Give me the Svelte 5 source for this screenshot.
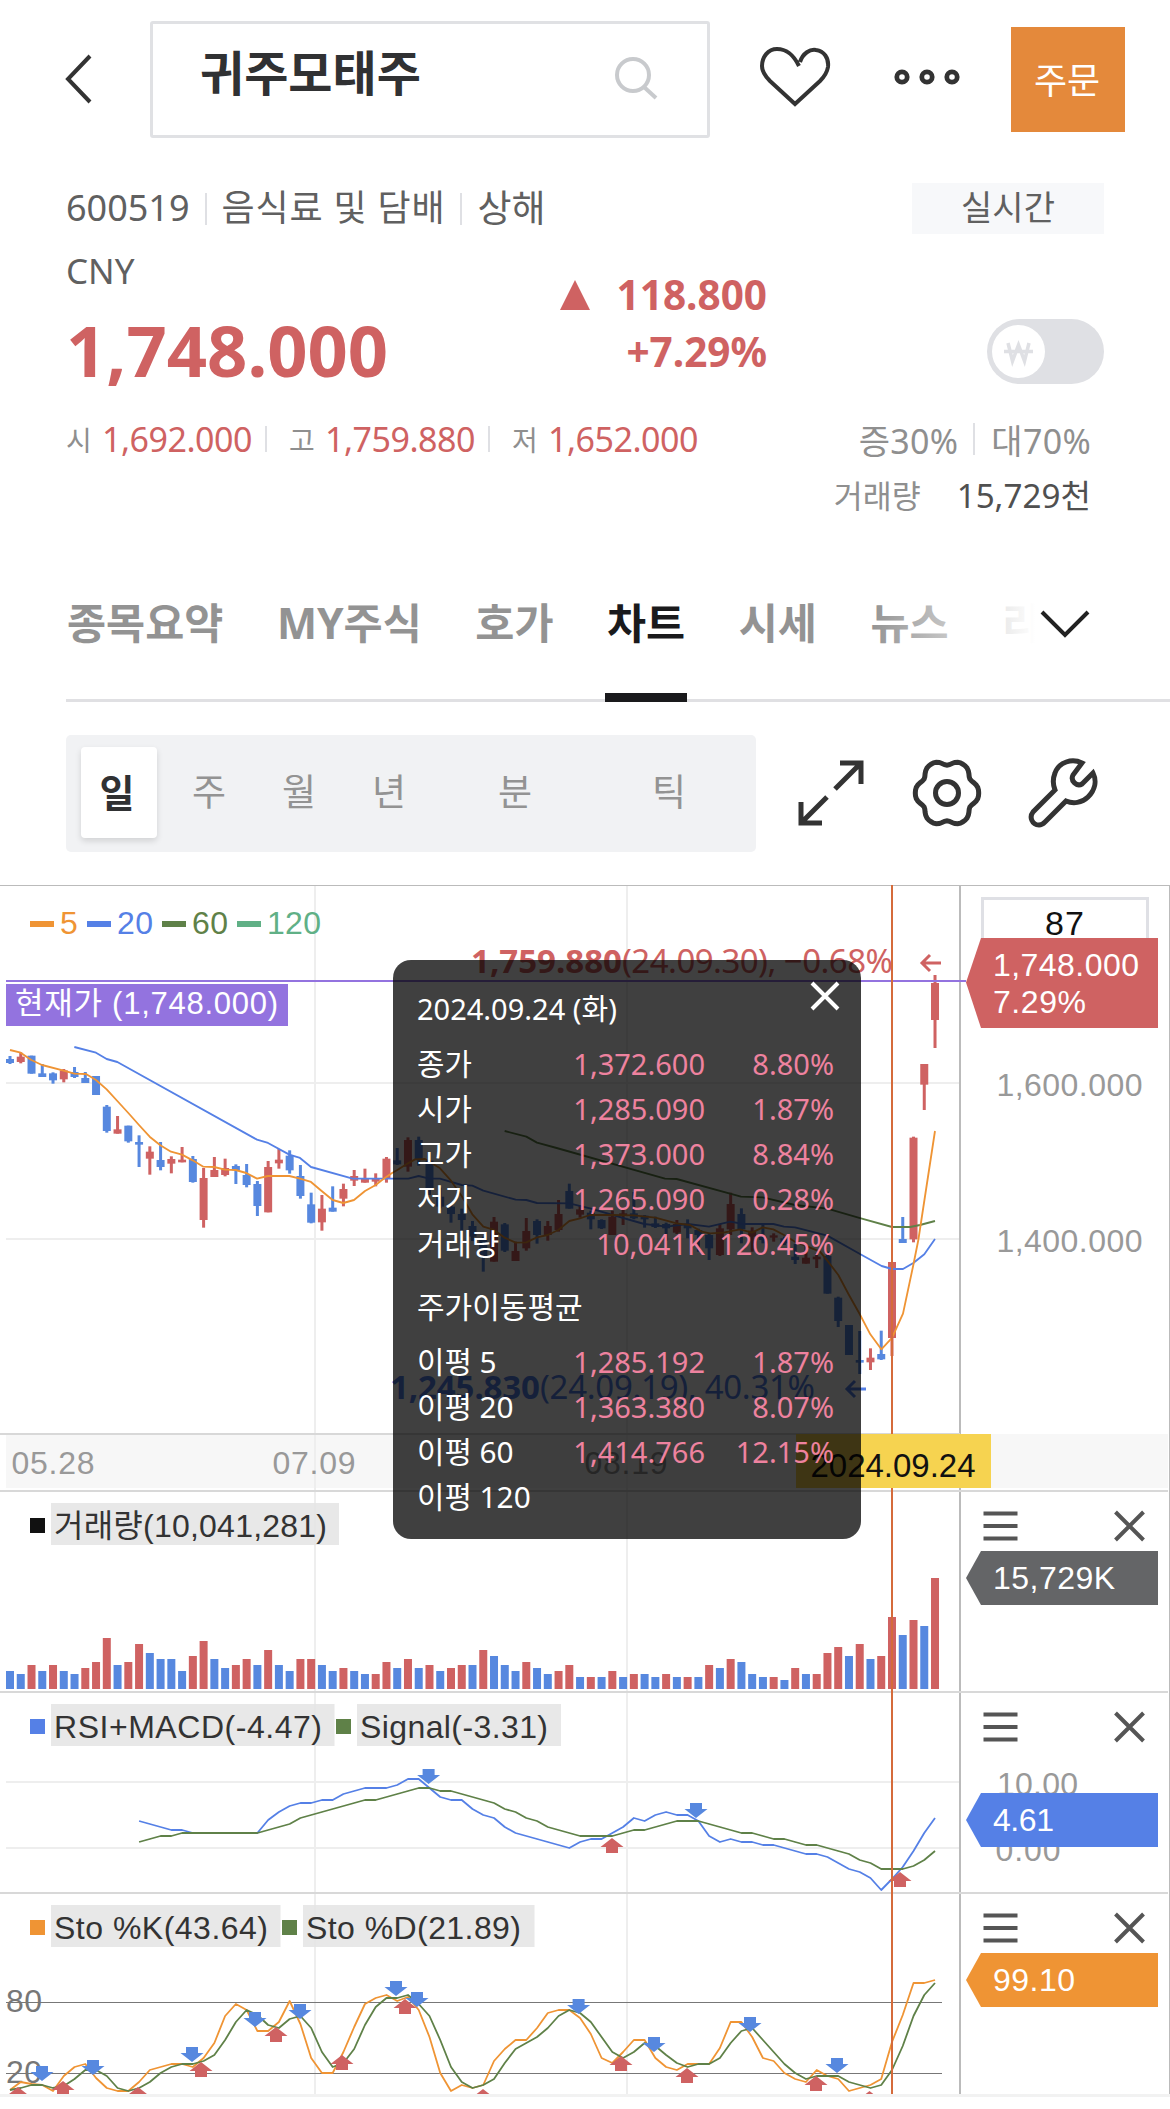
<!--
  STOCK DETAIL PAGE

  Quote header, section tabs and the daily chart with its volume, RSI+MACD and
  stochastic panels. The chart is one SVG in page pixels.
-->

<script>
  const tabs = ['종목요약', 'MY주식', '호가', '차트', '시세', '뉴스', '리'];
  const activeTab = '차트';

  const periods = [
    { text: '일', width: 76, active: true },
    { text: '주', width: 90 },
    { text: '월', width: 90 },
    { text: '년', width: 90 },
    { text: '분', width: 162 },
    { text: '틱', width: 146 },
  ];

  const priceRows = [
    ['종가', '1,372.600', '8.80%'],
    ['시가', '1,285.090', '1.87%'],
    ['고가', '1,373.000', '8.84%'],
    ['저가', '1,265.090', '0.28%'],
    ['거래량', '10,041K', '120.45%'],
  ];
  const averageRows = [
    ['이평 5', '1,285.192', '1.87%'],
    ['이평 20', '1,363.380', '8.07%'],
    ['이평 60', '1,414.766', '12.15%'],
    ['이평 120', '', ''],
  ];

  const RED = '#cf6262';
  const BLUE = '#5788df';
  const LINE_BLUE = '#5580e6';
  const ORANGE = '#ef9434';
  const GREEN = '#5f8148';

  /** Horizontal center of the bar at an index. */
  const barX = (index) => 10 + index * 10.756;

  // up/down flag, high, body top, body bottom, low (thirds of a pixel)
  const candles = [
    'b 528 537 549 552', 'r 517 530 546 550', 'b 527 527 581 581', 'b 552 580 591 591',
    'b 577 580 601 611', 'r 567 571 598 607', 'b 561 576 591 594', 'b 576 594 609 609',
    'b 588 588 645 645', 'b 675 680 753 758', 'r 708 748 761 761', 'b 737 737 784 788',
    'b 766 786 794 861', 'r 799 815 836 884', 'b 786 840 861 871', 'r 829 837 851 880',
    'r 801 839 847 847', 'b 828 837 906 908', 'r 864 894 1020 1043', 'r 831 870 891 891',
    'r 836 864 885 889', 'b 853 858 871 912', 'b 852 885 915 922', 'b 903 912 978 1008',
    'r 843 861 997 997', 'r 807 839 850 866', 'b 811 827 871 881', 'b 855 888 948 956',
    'b 938 973 1028 1030', 'r 945 986 1027 1052', 'b 919 983 995 995', 'r 911 927 956 979',
    'r 870 888 902 918', 'r 866 897 908 908', 'r 880 894 905 919', 'r 831 836 897 908',
    'b 804 841 853 855', 'r 772 780 860 875', 'b 770 780 840 857', 'b 840 842 925 945',
    'b 923 950 980 985', 'b 970 980 1002 1028', 'b 986 1002 1020 1052', 'b 1023 1038 1070 1083',
    'b 1070 1080 1130 1175', 'r 1011 1025 1145 1145', 'b 1029 1033 1112 1116', 'r 1085 1113 1143 1143',
    'r 1014 1053 1105 1112', 'b 1018 1023 1065 1091', 'r 1023 1038 1065 1082', 'r 960 1002 1050 1055',
    'b 911 933 986 986', 'r 975 988 1004 1013', 'b 992 998 1018 1048', 'b 1018 1020 1045 1047',
    'r 992 1010 1065 1065', 'r 985 1000 1008 1035', 'b 936 1000 1015 1018', 'b 1005 1007 1018 1043',
    'b 1010 1030 1041 1044', 'b 1028 1032 1045 1082', 'r 1020 1032 1058 1062', 'b 1018 1032 1045 1075',
    'b 1046 1050 1065 1115', 'b 1060 1065 1105 1140', 'r 1032 1045 1125 1128', 'r 938 972 1048 1065',
    'b 985 1002 1048 1090', 'r 1042 1052 1070 1115', 'b 1033 1070 1080 1090', 'r 1060 1066 1073 1085',
    'b 1070 1075 1090 1095', 'b 1092 1130 1140 1152', 'r 1095 1133 1151 1151', 'r 1120 1130 1138 1164',
    'b 1115 1128 1241 1241', 'b 1250 1253 1323 1341', 'b 1335 1335 1425 1425', 'b 1353 1440 1448 1482',
    'r 1405 1433 1447 1470', 'b 1352 1422 1438 1440', 'r 1146 1146 1374 1428', 'b 1011 1077 1089 1089',
    'r 770 773 1078 1087', 'r 552 552 614 690', 'r 285 309 420 504',
  ].map((row, index) => {
    const [flag, ...values] = row.split(' ');
    const [high, top, bottom, low] = values.map((v) => 880 + v / 3);
    return { x: barX(index), color: flag === 'r' ? RED : BLUE, high, top, bottom, low };
  });

  const ma5 = '30,510 62,518 94,540 126,555 191,572 223,581 258,582 288,600 320,628 352,663 385,699 417,735 449,770 481,796 513,815 546,824 578,841 610,860 642,861 675,869 707,870 739,879 771,896 804,888 868,888 900,896 933,906 965,933 998,960 1030,969 1062,960 1095,933 1127,915 1150,897 1175,880 1192,870 1224,850 1245,838 1275,837 1320,865 1353,902 1385,948 1417,1003 1450,1040 1482,1050 1514,1073 1547,1088 1579,1087 1611,1072 1643,1065 1675,1050 1708,1023 1740,1015 1770,1005 1837,1005 1901,1006 1966,1013 2030,1030 2070,1035 2105,1055 2130,1060 2170,1058 2220,1048 2256,1058 2288,1042 2320,1048 2352,1065 2385,1085 2460,1115 2482,1142 2515,1185 2547,1245 2579,1302 2611,1363 2644,1408 2676,1374 2709,1301 2740,1155 2755,1080 2805,753';
  const ma20 = '223,501 288,518 320,537 352,546 771,779 804,789 868,824 900,834 933,861 1058,896 1225,896 1256,888 1288,896 1320,896 1385,915 1417,917 1450,932 1547,959 1579,960 1611,969 1708,970 1770,985 1901,1023 1933,1032 2000,1040 2063,1032 2127,1040 2191,1025 2230,1032 2320,1032 2352,1040 2385,1042 2482,1067 2580,1122 2645,1158 2676,1167 2709,1167 2740,1149 2773,1123 2805,1077';
  const ma60 = '1514,753 1579,770 1611,788 1670,804 1995,896 2030,897 2223,950 2288,952 2385,975 2482,986 2583,1015 2676,1041 2730,1041 2760,1035 2805,1023';

  const volumes = 'b18 b15 r24 b18 r24 b18 b15 r21 r27 r51 b24 r27 r45 b36 b30 b30 b18 r33 r48 b30 b21 r24 r30 b24 r39 b24 b18 r30 r30 b24 b18 r21 b18 b15 r15 r27 b21 r30 b21 r24 b18 r21 r24 b24 r39 b33 b24 b18 r27 b21 b15 r18 r24 b12 r12 b12 r18 b12 r15 b15 b12 r15 b12 r12 b12 r24 b21 r30 b27 b15 b12 r12 b9 r21 b15 r15 r36 r42 b33 r45 b30 r33 r72 b54 r69 b63 r111'
    .split(' ')
    .map((v) => ({ color: v[0] === 'r' ? RED : BLUE, height: Number(v.slice(1)) }));

  // Oscillator values, pixels below the top of the RSI panel
  const rsi = [131, 134, 137, 140, 140, 143, 143, 143, 143, 143, 143, 143, 130, 122, 116, 113, 113, 110, 110, 104, 101, 98, 98, 98, 95, 89, 89, 98, 107, 110, 110, 119, 125, 128, 137, 143, 146, 149, 152, 155, 158, 152, 149, 149, 143, 137, 128, 131, 125, 122, 125, 125, 131, 146, 152, 149, 152, 152, 155, 155, 158, 161, 164, 164, 167, 173, 179, 182, 188, 200, 189, 177, 161, 143, 128];
  const signal = [152, 149, 146, 146, 143, 143, 143, 143, 143, 143, 143, 143, 140, 137, 134, 128, 125, 122, 119, 116, 113, 110, 110, 107, 104, 101, 98, 98, 101, 101, 104, 107, 110, 113, 119, 122, 128, 131, 137, 140, 143, 146, 146, 146, 146, 143, 140, 140, 137, 134, 131, 131, 131, 134, 137, 140, 143, 143, 146, 149, 149, 152, 155, 155, 158, 161, 164, 170, 173, 179, 179, 179, 176, 170, 161];
  const stoK = [400, 392, 394, 395, 401, 386, 377, 374, 388, 398, 401, 401, 392, 380, 377, 374, 374, 377, 368, 353, 326, 314, 320, 341, 341, 332, 311, 334, 368, 383, 383, 362, 337, 314, 308, 305, 311, 307, 320, 347, 383, 401, 395, 398, 395, 371, 359, 350, 350, 338, 323, 320, 320, 328, 344, 368, 373, 362, 350, 350, 368, 377, 380, 374, 374, 374, 358, 332, 332, 347, 368, 371, 383, 389, 392, 380, 386, 389, 401, 398, 395, 389, 352, 325, 293, 293, 290];
  const stoD = [400, 398, 395, 395, 398, 396, 389, 380, 380, 386, 398, 401, 398, 392, 383, 377, 374, 374, 371, 365, 350, 332, 320, 325, 335, 338, 329, 326, 338, 362, 377, 373, 359, 335, 317, 308, 308, 305, 314, 326, 350, 377, 392, 398, 395, 389, 373, 359, 353, 347, 338, 326, 320, 323, 332, 347, 362, 368, 362, 353, 356, 365, 373, 377, 374, 374, 368, 353, 341, 338, 350, 362, 374, 383, 389, 386, 386, 386, 392, 395, 398, 395, 380, 356, 326, 305, 293];

  function points(values, start = 0) {
    return values.map((v, index) => `${barX(index + start)},${1690 + v}`).join(' ');
  }

  // Tips of the buy (up) and sell (down) markers
  const sells = [
    [428.6, 1784], [696, 1818], [42, 2081], [93, 2075], [192, 2062], [255, 2027],
    [300, 2019], [396, 1996], [417, 2007], [578.6, 2014], [654, 2052], [750, 2032], [837, 2073],
  ];
  const buys = [
    [612, 1838], [900, 1872], [18, 2087], [63, 2081], [138, 2087], [201, 2062], [276, 2027],
    [342, 2055], [405, 1999], [483, 2089], [621, 2056], [687, 2068], [816, 2076], [869.5, 2091],
  ];

  const averages = [
    { text: '5', x: 30, width: 17, color: ORANGE },
    { text: '20', x: 87, width: 36, color: LINE_BLUE },
    { text: '60', x: 162, width: 36, color: GREEN },
    { text: '120', x: 237, width: 54, color: '#60b086' },
  ];

  const legends = [
    { x: 30, y: 1503, width: 288, length: 273, color: '#111', text: '거래량(10,041,281)' },
    { x: 30, y: 1704, width: 283.5, length: 268, color: LINE_BLUE, text: 'RSI+MACD(-4.47)' },
    { x: 336, y: 1704, width: 204, length: 188, color: GREEN, text: 'Signal(-3.31)' },
    { x: 30, y: 1905, width: 229.5, length: 214, color: ORANGE, text: 'Sto %K(43.64)' },
    { x: 282, y: 1905, width: 231.5, length: 215, color: GREEN, text: 'Sto %D(21.89)' },
  ];

  const tags = [
    { y: 1551, color: '#646567', text: '15,729K', length: 122 },
    { y: 1793, color: LINE_BLUE, text: '4.61', length: 61 },
    { y: 1953, color: ORANGE, text: '99.10', length: 82 },
  ];

  // Six-lobed outline of the settings icon
  const gear = Array.from({ length: 72 }, (_, i) => {
    const angle = (i * Math.PI) / 36;
    const r = 29.6 + 2.6 * Math.cos(6 * angle) - 0.5 * Math.cos(12 * angle);
    return `${(35 + r * Math.cos(angle)).toFixed(1)},${(35 + 1.05 * r * Math.sin(angle)).toFixed(1)}`;
  }).join(' ');
</script>

<div class="page">
  <header>
    <svg class="back" width="30" height="52" viewBox="0 0 30 52">
      <path d="M27 3 L5 26 L27 49" />
    </svg>
    <div class="search">
      <span>귀주모태주</span>
      <svg width="46" height="46" viewBox="0 0 46 46">
        <circle cx="20" cy="20" r="16" />
        <path d="M31 32 L43 43" />
      </svg>
    </div>
    <svg class="heart" width="74" height="64" viewBox="0 0 74 64">
      <path d="M42 17 C45 8 52 4 58 5 C66 6 71 13 70 22 C69 28 66 32 62 36 L37 59 L12 36 C7 31 4 27 4 21 C4 12 10 4 19 4 C30 4 36 11 41 21" />
    </svg>
    <svg class="more" width="68" height="18" viewBox="0 0 68 18">
      <circle cx="9" cy="9" r="5.2" />
      <circle cx="34" cy="9" r="5.2" />
      <circle cx="59" cy="9" r="5.2" />
    </svg>
    <button class="order">주문</button>
  </header>

  <section class="quote">
    <div class="info">
      <span>600519</span><i></i><span class="sector">음식료 및 담배</span><i></i><span class="market">상해</span>
      <b class="live">실시간</b>
    </div>
    <div class="currency">CNY</div>
    <div class="price">
      <strong>1,748.000</strong>
      <div class="change">
        <div><em></em>118.800</div>
        <div>+7.29%</div>
      </div>
      <div class="toggle">
        <svg width="53" height="53" viewBox="0 0 53 53">
          <circle cx="26.5" cy="26.5" r="26.5" fill="#fff" />
          <path d="M16 18 L20.500 36 L26.500 20 L32.500 36 L37 18 M12 26.500 H41" />
        </svg>
      </div>
    </div>
    <div class="range">
      <small>시</small><span>1,692.000</span><i></i>
      <small>고</small><span>1,759.880</span><i></i>
      <small>저</small><span>1,652.000</span>
      <div class="margin"><span>증30%</span><i></i><span>대70%</span></div>
    </div>
    <div class="volume"><span>거래량</span><b>15,729천</b></div>
  </section>

  <nav>
    {#each tabs as tab}
      <span class:active={tab === activeTab}>{tab}</span>
    {/each}
    <div class="fade">
      <svg width="56" height="34" viewBox="0 0 56 34"><path d="M5 4 L28 27 L51 4" /></svg>
    </div>
  </nav>

  <div class="toolbar">
    <div class="periods">
      {#each periods as period}
        <span class:active={period.active} style="width: {period.width}px">{period.text}</span>
      {/each}
    </div>
    <svg width="70" height="70" viewBox="0 0 70 70">
      <path d="M44 5 H65 V26 M64 6 L39 31 M31 39 L6 64 M5 44 V65 H26" />
    </svg>
    <svg width="70" height="70" viewBox="0 0 70 70">
      <polygon points={gear} />
      <circle cx="35" cy="35" r="11.500" />
    </svg>
    <svg width="70" height="70" viewBox="0 0 70 70">
      <path d="M54 5 C44 0 31 4 27 15 C25 20 25 27 27 32 L5 54 C1 59 4 67 11 67 C14 67 15 66 17 64 L38 43 C45 46 54 45 60 39 C67 32 69 23 65 15 L54 26 C49 29 42 23 45 17 Z" />
    </svg>
  </div>

  <div class="chart">
    <svg width="1170" height="1224" viewBox="0 885 1170 1224">
      <defs>
        <clipPath id="plot"><rect x="0" y="885" width="1170" height="1209" /></clipPath>
      </defs>

      <!-- Panels and grid -->
      <rect x="6" y="1434" width="1162" height="54" fill="#f7f7f7" />
      <g stroke="#eee" stroke-width="2">
        <path d="M315 886 V2094 M627 886 V2094" />
        <path d="M6 1083 H960 M6 1239 H960 M6 1782 H960 M6 1848 H960" />
      </g>
      <path d="M0 885.500 H1170 M1169.500 885 V2094" stroke="#bbb" />
      <path d="M960 886 V2094" stroke="#bbb" stroke-width="2" />
      <path d="M0 1434 H960 M0 1491 H1168 M0 1692 H1168 M0 1893 H1168" stroke="#d8d8d8" stroke-width="2" />
      <rect x="0" y="2094" width="1170" height="3" fill="#f2f2f2" />

      <!-- Price panel -->
      {#each averages as item}
        <rect x={item.x} y="921" width="24" height="6" fill={item.color} />
        <text x={item.x + 30} y="934" fill={item.color} textLength={item.width}>{item.text}</text>
      {/each}

      {#each candles as c}
        <rect x={c.x - 1.5} y={c.high} width="3" height={c.low - c.high} fill={c.color} />
        <rect x={c.x - 4} y={c.top} width="8" height={c.bottom - c.top} fill={c.color} />
      {/each}
      <g class="line" transform="translate(0 880) scale(0.33333)" stroke-width="5.500">
        <polyline points={ma60} stroke={GREEN} />
        <polyline points={ma20} stroke={LINE_BLUE} />
        <polyline points={ma5} stroke={ORANGE} />
      </g>

      <path d="M6 981 H966" stroke="#9373df" stroke-width="2" />
      <rect x="6" y="984" width="282" height="42" fill="#9373df" />
      <text x="15" y="1014" fill="#fff" font-size="31" textLength="263">현재가 (1,748.000)</text>

      <g class="noto" fill={RED}>
        <text x="471" y="973" font-weight="700" textLength="151">1,759.880</text>
        <text x="622" y="973" textLength="271">(24.09.30), −0.68%</text>
        <path d="M941 963 H922 M930 955 L922 963 L930 971" stroke={RED} />
      </g>
      <g class="noto" fill={LINE_BLUE}>
        <text x="390" y="1398.500" font-weight="700" textLength="150">1,245.830</text>
        <text x="540" y="1398.500" textLength="275">(24.09.19), 40.31%</text>
        <path d="M866 1389 H847 M855 1381 L847 1389 L855 1397" stroke={LINE_BLUE} />
      </g>

      <g fill="#999">
        <text x="11.500" y="1474" textLength="83">05.28</text>
        <text x="272.500" y="1474" textLength="83">07.09</text>
        <text x="584.500" y="1474" textLength="83">08.19</text>
        <text x="996.500" y="1096" textLength="146">1,600.000</text>
        <text x="996.500" y="1252" textLength="146">1,400.000</text>
        <text x="997" y="1795" textLength="81">10.00</text>
        <text x="995.500" y="1861" textLength="65">0.00</text>
      </g>

      <!-- Volume -->
      {#each volumes as volume, index}
        <rect x={barX(index) - 4} y={1689 - volume.height} width="8" height={volume.height} fill={volume.color} />
      {/each}

      <!-- Oscillators -->
      <path d="M6 2002.500 H942 M6 2073.500 H942" stroke="#777" />
      <g fill="#777">
        <text x="6" y="2012" textLength="36">80</text>
        <text x="6" y="2083" textLength="36">20</text>
      </g>
      <g class="line" stroke-width="1.800">
        <polyline points={points(rsi, 12)} stroke={LINE_BLUE} />
        <polyline points={points(signal, 12)} stroke={GREEN} />
        <polyline points={points(stoK)} stroke={ORANGE} />
        <polyline points={points(stoD)} stroke={GREEN} />
      </g>
      <g clip-path="url(#plot)">
        {#each sells as [x, y]}
          <path transform="translate({x} {y})" d="M0 0 L-11.500 -9 H-6 V-15 H6 V-9 H11.500 Z" fill={BLUE} />
        {/each}
        {#each buys as [x, y]}
          <path transform="translate({x} {y})" d="M0 0 L11.500 9 H6 V15 H-6 V9 H-11.500 Z" fill={RED} />
        {/each}
      </g>

      {#each legends as legend}
        <rect x={legend.x} y={legend.y + 15} width="15" height="15" fill={legend.color} />
        <rect x={legend.x + 21} y={legend.y} width={legend.width} height="42" fill="#e4e4e4" fill-opacity="0.850" />
        <text x={legend.x + 24} y={legend.y + 33.5} fill="#333" textLength={legend.length}>{legend.text}</text>
      {/each}

      <!-- Crosshair -->
      <path d="M892 885 V2094" stroke="#d56b3b" stroke-width="2" />
      <rect x="796" y="1434" width="195" height="54" fill="#f6d350" />
      <text x="810.500" y="1477" fill="#111" font-size="33" textLength="165">2024.09.24</text>

      <!-- Axis tags -->
      <path d="M982.500 940 V898.500 H1147.500 V940" fill="#fff" stroke="#dfe0e5" stroke-width="3" />
      <text x="1045" y="935" fill="#111" font-size="34" textLength="39">87</text>
      <path d="M966 982.500 L981 938 H1158 V1028 H981 Z" fill={RED} />
      <g fill="#fff">
        <text x="993" y="976" textLength="146">1,748.000</text>
        <text x="993" y="1013" textLength="93">7.29%</text>
      </g>
      {#each tags as tag}
        <path d="M966 {tag.y + 27} L981 {tag.y} H1158 V{tag.y + 54} H981 Z" fill={tag.color} />
        <text x="993" y={tag.y + 37.5} fill="#fff" textLength={tag.length}>{tag.text}</text>
      {/each}
      {#each [1511, 1712, 1913] as y}
        <path
          d="M983.500 {y + 2.5} h34 m-34 12.500 h34 m-34 12.500 h34 M1115.500 {y + 1} l28 28 m0 -28 l-28 28"
          stroke="#555"
          stroke-width="4"
        />
      {/each}
    </svg>

    <div class="tooltip">
      <svg width="32" height="32" viewBox="0 0 32 32"><path d="M3 3 L29 29 M29 3 L3 29" /></svg>
      <h4>2024.09.24 (화)</h4>
      {#each priceRows as [label, value, rate]}
        <div class="row"><span>{label}</span><b>{value}</b><b>{rate}</b></div>
      {/each}
      <h5>주가이동평균</h5>
      {#each averageRows as [label, value, rate]}
        <div class="row"><span>{label}</span><b>{value}</b><b>{rate}</b></div>
      {/each}
    </div>
  </div>
</div>

<style>
  :global(body) {
    margin: 0;
    background: #fff;
  }

  .page {
    width: 1170px;
    height: 2109px;
    overflow: hidden;
    color: #606060;
    font-family: 'Noto Sans', 'Noto Sans CJK KR', sans-serif;
  }

  .page svg {
    display: block;
    flex: none;
  }

  i {
    width: 2px;
    height: 32px;
    background: #dfe0e4;
  }

  b {
    font-weight: 400;
  }

  header {
    display: flex;
    align-items: center;
    height: 158px;
    padding-left: 63px;
    box-sizing: border-box;
  }

  header svg {
    fill: none;
    stroke: #333;
    stroke-width: 4;
  }

  .search {
    display: flex;
    justify-content: space-between;
    box-sizing: border-box;
    width: 560px;
    height: 117px;
    margin-left: 57px;
    padding: 31px 48px 0 47px;
    border: 3px solid #e0e1e4;
    border-radius: 3px;
    color: #303133;
    font-weight: 700;
    font-size: 48px;
    line-height: 36px;
  }

  .search svg {
    stroke: #c8cacd;
  }

  .heart {
    margin: -4px 0 0 48px;
  }

  .more {
    margin: -4px 0 0 61px;
    stroke-width: 4.8;
  }

  .order {
    width: 114px;
    height: 105px;
    margin-left: 50px;
    padding: 0 2px 3px 0;
    border: 0;
    background: #e4893b;
    color: #fff;
    font: 36px/102px 'Noto Sans CJK KR', sans-serif;
  }

  .quote {
    box-sizing: border-box;
    height: 422px;
    padding: 25px 66px 0;
  }

  .info {
    display: flex;
    align-items: center;
    height: 51px;
    font-size: 36px;
    line-height: 49px;
  }

  .info > span {
    margin-top: -3px;
  }

  .info i {
    margin: 0 15px;
  }

  .sector {
    letter-spacing: 0.8px;
  }

  .market {
    font-size: 37px;
  }

  .live {
    width: 192px;
    margin-left: auto;
    background: #f7f8fa;
    font-size: 34px;
    line-height: 49px;
    padding-bottom: 2px;
    text-align: center;
  }

  .currency {
    font-size: 35px;
    line-height: 74px;
  }

  .price {
    display: flex;
    height: 96px;
    color: #cf6262;
  }

  .price strong {
    width: 400px;
    font-size: 70.5px;
    line-height: 84px;
  }

  .change {
    width: 301px;
    margin-top: -42px;
    font-weight: 700;
    font-size: 40.5px;
    line-height: 57px;
    text-align: right;
  }

  .change em {
    display: inline-block;
    margin-right: 27px;
    border: 15px solid transparent;
    border-top: 0;
    border-bottom: 30px solid #cf6262;
  }

  .toggle {
    box-sizing: border-box;
    width: 117px;
    height: 65px;
    margin: 11px 0 0 auto;
    padding: 6px 5px;
    border-radius: 33px;
    background: #dfe0e4;
  }

  .toggle path {
    fill: none;
    stroke: #dfe0e4;
    stroke-width: 3.5;
  }

  .range {
    display: flex;
    align-items: center;
    height: 56px;
    margin-top: 7px;
    color: #cf6262;
    font-size: 34px;
  }

  .range small {
    width: 36px;
    color: #8f8f8f;
    font-size: 28px;
  }

  .range > span {
    width: 150px;
    letter-spacing: -0.5px;
  }

  .range i {
    height: 26px;
    margin: 0 22px 0 13px;
  }

  .margin {
    display: flex;
    align-items: center;
    margin: 0 13px 0 auto;
    color: #8f8f8f;
    letter-spacing: 0.3px;
  }

  .margin i {
    height: 32px;
    margin: 0 16px 0 15px;
  }

  .volume {
    display: flex;
    justify-content: flex-end;
    padding-right: 13px;
    color: #8f8f8f;
    font-size: 31.5px;
    line-height: 57px;
  }

  .volume b {
    margin-left: 36px;
    color: #505050;
    font-size: 33.2px;
  }

  nav {
    position: relative;
    display: flex;
    gap: 53.5px;
    box-sizing: border-box;
    height: 124px;
    margin-top: -2px;
    margin-left: 66px;
    padding-left: 1px;
    border-bottom: 3px solid #e0e0e3;
    color: #939393;
    font-weight: 700;
    font-size: 42.5px;
    line-height: 90px;
    white-space: nowrap;
  }

  nav span {
    height: 124px;
  }

  nav .active {
    box-sizing: border-box;
    margin: 0 -2px;
    padding: 0 2px;
    border-bottom: 9px solid #1a1a1c;
    color: #1a1a1c;
  }

  /* Hides the tabs that run under the expand arrow */
  .fade {
    position: absolute;
    top: 0;
    right: 0;
    box-sizing: border-box;
    width: 300px;
    height: 110px;
    padding: 30px 0 0 167px;
    background: linear-gradient(90deg, transparent, #fff 165px);
  }

  .fade path {
    fill: none;
    stroke: #222;
    stroke-width: 4;
  }

  .toolbar {
    display: flex;
    align-items: center;
    gap: 46px;
    height: 183px;
    padding-left: 66px;
  }

  .toolbar svg {
    margin-top: -2px;
    fill: none;
    stroke: #333;
    stroke-width: 5;
  }

  .periods {
    display: flex;
    box-sizing: border-box;
    width: 690px;
    height: 117px;
    margin-right: -6px;
    padding: 12px 0 0 15px;
    border-radius: 5px;
    background: #f1f2f4;
    color: #939393;
    font-size: 37px;
    line-height: 90px;
    text-align: center;
  }

  .periods .active {
    box-sizing: border-box;
    height: 91px;
    margin-right: 7px;
    padding-right: 4px;
    border-radius: 4px;
    background: #fff;
    box-shadow: 0 3px 6px #0002;
    color: #303133;
    font-weight: 700;
    font-size: 38px;
  }

  .chart {
    position: relative;
    font-family: 'Liberation Sans', 'Noto Sans CJK KR', sans-serif;
  }

  .chart > svg {
    fill: none;
    font-size: 32px;
  }

  .line {
    fill: none;
    stroke-linejoin: round;
  }

  .noto {
    font-size: 33px;
    font-family: 'Noto Sans', sans-serif;
  }

  .noto path {
    fill: none;
    stroke-width: 3;
  }

  .tooltip {
    position: absolute;
    top: 75px;
    left: 393px;
    box-sizing: border-box;
    width: 468px;
    height: 579px;
    padding: 26px 28px 0 24px;
    border-radius: 18px;
    background: rgba(0, 0, 0, 0.75);
    color: #fff;
    font-size: 29px;
    font-family: 'Noto Sans', 'Noto Sans CJK KR', sans-serif;
    line-height: 45px;
  }

  .tooltip svg {
    position: absolute;
    top: 20px;
    right: 20px;
    stroke: #fff;
    stroke-width: 4;
  }

  .tooltip h4,
  .tooltip h5 {
    margin: 0 0 10px;
    font-weight: 400;
    font-size: 29px;
  }

  .tooltip h5 {
    margin-top: 18px;
    font-size: 30px;
  }

  .row {
    display: grid;
    grid-template-columns: 138px 150px 129px;
    height: 45px;
    white-space: nowrap;
  }

  .row span {
    font-size: 29.8px;
  }

  .row b {
    color: #ee829f;
    text-align: right;
  }
</style>
